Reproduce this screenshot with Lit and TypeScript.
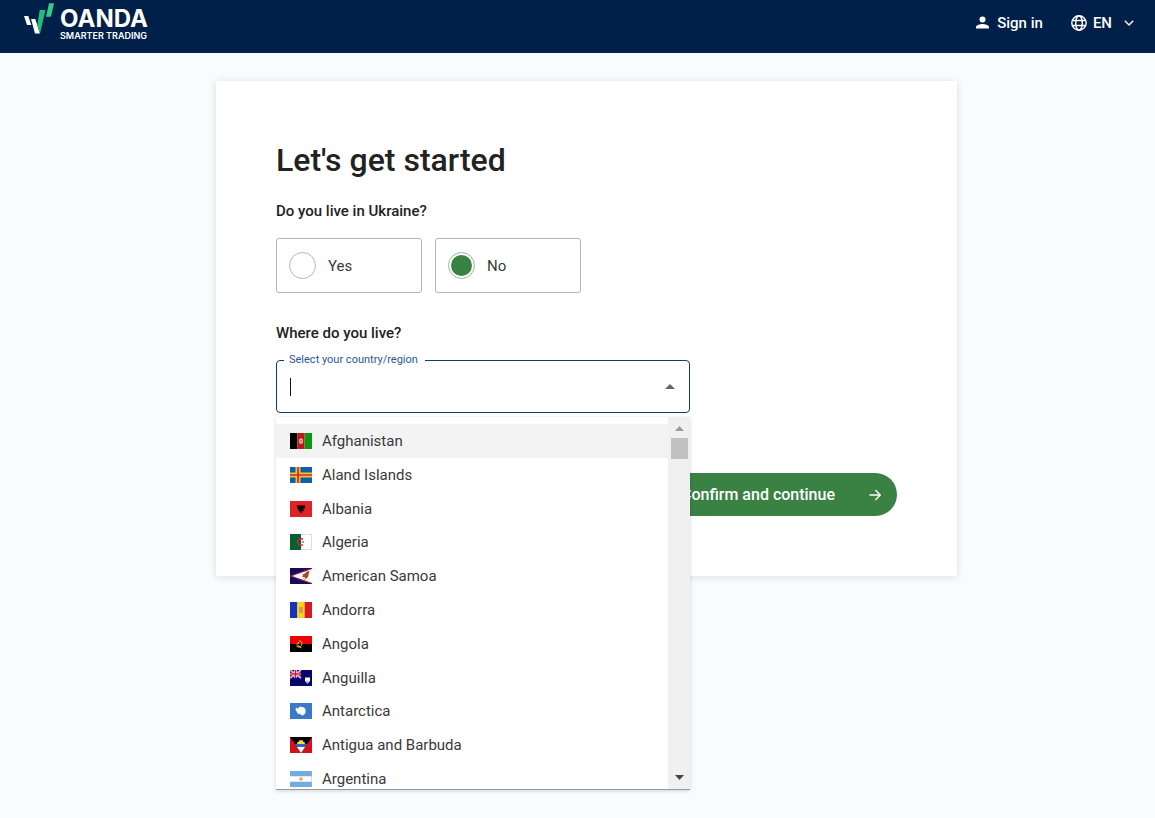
import { LitElement, html, svg, css } from "lit";
import { customElement, state } from "lit/decorators.js";

const flags: Record<string, unknown> = {
  Afghanistan: svg`<path fill="#000" d="M0 0h7.4v16H0z"/><path fill="#c01818" d="M7.4 0h7.2v16H7.4z"/><path fill="#0c9612" d="M14.6 0H22v16h-7.4z"/><path fill="#e9a9a9" d="M9 6.500 11 5l2 1.500V9l-.8 1.800H9.800L9 9z"/><path fill="#c84040" d="M10.500 7h1v2h-1z"/>`,
  "Aland Islands": svg`<path fill="#0f5fa8" d="M0 0h22v16H0z"/><path fill="#f2c230" d="M5.5 0h5v16h-5zM0 5.5h22v5H0z"/><path fill="#d0282e" d="M7.2 0h1.7v16H7.2zM0 7.2h22v1.6H0z"/>`,
  Albania: svg`<path fill="#dc2426" d="M0 0h22v16H0z"/><path fill="#1c0505" d="m11 5 1-1.2 1 .9 2-.6-.2 3.400-1.400.8.4 1.600-1.400.4L11 12.600l-1.400-2.300-1.400-.4.4-1.600-1.400-.8L7 4.100l2 .6 1-.9z"/>`,
  Algeria: svg`<path fill="#fff" d="M0 0h22v16H0z"/><path fill="#08602f" d="M0 0h11v16H0z"/><path fill="none" stroke="#cf2444" stroke-width="1.3" d="M13 5.4a3.3 3.3 0 1 0 0 5.2"/><path fill="#cf2444" d="m11 8 3-1-.4 1 .4 1z"/><path fill="none" stroke="#bbb" stroke-width=".6" d="M11 .3h10.7v15.400H11"/>`,
  "American Samoa": svg`<path fill="#160c5e" d="M0 0h22v16H0z"/><path fill="#c01c2e" d="M0 7.600 22 0v1L1 8l21 7v1L0 8.400z"/><path fill="#fff" d="M2 8 22 1v14z"/><path fill="#9a5025" d="m19.5 3-2.500.5-3 2.500-2.200.8 1.500.8-1.300 1.400 2.300-.1L16 11l2-2z"/><path fill="#e0a03a" d="m12 9.500 4 1.500-1.500 1z"/>`,
  Andorra: svg`<path fill="#1a30b8" d="M0 0h7.4v16H0z"/><path fill="#fbd21b" d="M7.4 0h7.200v16H7.4z"/><path fill="#d51a26" d="M14.6 0H22v16h-7.400z"/><path fill="#cf9f50" d="M9 5h4v5l-2 1.500L9 10z"/>`,
  Angola: svg`<path fill="#f00000" d="M0 0h22v8H0z"/><path fill="#000" d="M0 8h22v8H0z"/><path fill="none" stroke="#f4d22a" d="M9 5c3-.5 4 3.500 1.500 5.500-1 .8-3 .6-4-.2M6.500 8.500l5 3.500"/><circle cx="8.2" cy="7" r=".9" fill="#f4d22a"/>`,
  Anguilla: svg`<path fill="#07076a" d="M0 0h22v16H0z"/><path stroke="#fff" stroke-width="1.6" d="m0 0 11 8M11 0 0 8"/><path stroke="#d21034" stroke-width=".6" d="m0 0 11 8M11 0 0 8"/><path stroke="#fff" stroke-width="2.6" d="M5.500 0v8M0 4h11"/><path stroke="#d21034" stroke-width="1.4" d="M5.500 0v8M0 4h11"/><path fill="#fff" d="M15 7.500h5V11l-2.500 2.700L15 11z"/><path fill="#99b9e8" d="M15.500 10.700h4l-2 2.300z"/>`,
  Antarctica: svg`<path fill="#3a7ac8" d="M0 0h22v16H0z"/><path fill="#fff" d="m6 4.500 2 1.200 1.500-2 3 .3 2.200 1 1 2.500-.5 3-2.200 2-2-.5-.8-1-2.700-.5-.8-2L5.500 7z"/>`,
  "Antigua and Barbuda": svg`<path fill="#d8101c" d="M0 0h22v16H0z"/><path fill="#000" d="M0 0h22L11 16z"/><path fill="#ffd83a" d="m7 7 .5-2 1.400-.2.6-1.800 1.500.6 1.500-.6.6 1.800 1.400.2.5 2z"/><path fill="#2b65c8" d="M4.800 7h12.400l-2.100 3H6.900z"/><path fill="#fff" d="M6.900 10h8.200L11 16z"/>`,
  Argentina: svg`<path fill="#fff" d="M0 0h22v16H0z"/><path fill="#74acdf" d="M0 0h22v5.3H0zM0 10.7h22V16H0z"/><circle cx="11" cy="8" r="1.7" fill="#eba83a"/><path stroke="#aab8c4" stroke-width=".6" d="M21.7 0v16"/>`,
};

@customElement("country-picker")
export class CountryPicker extends LitElement {
  @state() private active = "Afghanistan";

  static styles = css`
    :host { display: block; position: relative; }
    * { box-sizing: border-box; }
    .field {
      display: flex; align-items: center; margin: 0; min-width: 0;
      height: 60px; padding: 0 14px 6px 13px;
      border: 1px solid #0a3f73; border-radius: 4px;
    }
    .legend { padding: 0 7px 0 5px; margin-left: -6px; font-size: 11px; line-height: 14px; color: #2a5a9a; }
    .caret { width: 1px; height: 18px; background: #111; }
    .input { flex: 1; min-width: 0; height: 36px; padding: 0; border: 0; outline: 0; background: none; font: 16px Roboto, sans-serif; caret-color: transparent; }
    .toggle { display: grid; place-items: center; width: 10px; height: 24px; padding: 0; border: 0; background: none; }
    .popup {
      position: absolute; z-index: 2; top: 100%; left: 0; right: 0; margin-top: 4px;
      display: flex; height: 373px; overflow: hidden; background: #fff;
      border-bottom: 1px solid #999; box-shadow: 0 1px 4px rgba(0, 0, 0, 0.16);
    }
    .list { flex: 1; display: grid; grid-template-rows: repeat(11, 1fr); height: 372px; margin: 7px 0 0; padding: 0; list-style: none; }
    .option { display: flex; align-items: center; gap: 10px; padding-left: 14px; font-size: 15px; color: #3a3a3a; }
    .option.active { background: #f3f3f3; }
    .flag { display: block; width: 22px; height: 16px; }
    .scroll { display: flex; flex-direction: column; align-items: center; width: 22px; padding: 9px 0; background: #f0f0f0; }
    .thumb { width: 17px; height: 21px; margin-top: 7px; margin-bottom: auto; background: #c1c1c1; }
  `;

  render() {
    return html`
      <fieldset class="field">
        <legend class="legend"><label for="country">Select your country/region</label></legend>
        <span class="caret"></span>
        <input class="input" id="country" role="combobox" aria-expanded="true" aria-controls="countries" autocomplete="off" />
        <button class="toggle" type="button" aria-label="Close list">
          <svg width="10" height="5" viewBox="0 0 10 5"><path fill="#666" d="M0 5 5 0l5 5z" /></svg>
        </button>
      </fieldset>
      <div class="popup">
        <ul class="list" id="countries" role="listbox" aria-label="Countries">
          ${Object.entries(flags).map(
            ([name, flag]) => html`
              <li class="option ${name === this.active ? "active" : ""}" role="option"
                aria-selected=${name === this.active} @mouseenter=${() => (this.active = name)}>
                <svg class="flag" viewBox="0 0 22 16" aria-hidden="true">${flag}</svg>
                <span>${name}</span>
              </li>`
          )}
        </ul>
        <div class="scroll" aria-hidden="true">
          <svg width="9" height="5" viewBox="0 0 9 5"><path fill="#999" d="M0 5 4.5 0 9 5z" /></svg>
          <div class="thumb"></div>
          <svg width="9" height="5" viewBox="0 0 9 5"><path fill="#444" d="m0 0 4.5 5L9 0z" /></svg>
        </div>
      </div>`;
  }
}

@customElement("app-root")
export class AppRoot extends LitElement {
  @state() private inUkraine = false;

  static styles = css`
    :host { display: block; min-height: 100vh; background: #f8fcff; color: #222; font-family: Roboto, sans-serif; }
    * { box-sizing: border-box; }
    .header { display: flex; align-items: center; justify-content: space-between; height: 53px; padding: 0 21px 8px 24px; background: #00204a; color: #fff; }
    .brand { display: flex; align-self: flex-start; gap: 6px; color: #fff; text-decoration: none; font-family: Inter, sans-serif; }
    .mark { display: block; width: 30px; height: 38px; }
    .wordmark { display: flex; flex-direction: column; padding-top: 7px; }
    .name { font-size: 24px; line-height: 24px; font-weight: 700; }
    .tagline { font-size: 9px; line-height: 10px; font-weight: 600; }
    .nav { display: flex; align-items: center; gap: 28px; }
    .action { display: flex; align-items: center; padding: 0; border: 0; background: none; color: #fff; font: 500 15px/20px Roboto, sans-serif; text-decoration: none; }
    .action svg { display: block; }
    .person { margin-right: 8px; }
    .globe { margin-right: 6px; }
    .chevron { margin-left: 12px; }
    .main { padding: 28px 0 28px 18px; }
    .card { width: 100%; max-width: 741px; margin: 0 auto; padding: 60px; background: #fff; box-shadow: 0 1px 8px rgba(0, 0, 0, 0.12); }
    .title { margin: 0 0 22px; font-size: 32px; line-height: 38px; font-weight: 500; }
    .group { margin: 0; padding: 0; border: 0; }
    .question { margin: 0; padding: 0; font-size: 15px; line-height: 20px; font-weight: 500; }
    .choices { display: flex; gap: 13px; margin-top: 17px; }
    .choice { display: flex; align-items: center; gap: 12px; width: 146px; height: 55px; padding: 0 12px; border: 1px solid #b5b5b5; border-radius: 3px; font-size: 15px; color: #3a3a3a; }
    .radio { appearance: none; width: 27px; height: 27px; margin: 0; padding: 2px; border: 1px solid #b5b5b5; border-radius: 50%; background: #fff content-box; }
    .radio:checked { border-color: #8fbb96; background-color: #398243; }
    .where { margin-top: 30px; }
    .picker { width: calc(100% * 2 / 3); margin-top: 10px; }
    .footer { display: flex; justify-content: flex-end; margin-top: 60px; }
    .submit { display: flex; align-items: center; gap: 34px; height: 43px; padding: 0 16px 0 44px; border: 0; border-radius: 22px; background: #398243; color: #fff; font: 500 16px/20px Roboto, sans-serif; }
  `;

  private choice(value: string, label: string, on: boolean) {
    return html`<label class="choice">
      <input class="radio" type="radio" name="ukraine" value=${value} .checked=${this.inUkraine === on}
        @change=${() => (this.inUkraine = on)} />
      ${label}
    </label>`;
  }

  render() {
    return html`
      <header class="header">
        <a class="brand" href="#" aria-label="OANDA Smarter Trading">
          <svg class="mark" viewBox="0 0 30 38" aria-hidden="true">
            <path fill="#fff" d="M0 16h4.3l3 9H3zM7 19h4.3L16 33.500h-5z" />
            <path fill="#25bb7c" d="M15.700 10h5.800L16 33.500l-2.800-8z" />
            <path fill="#35c98a" d="M25 3.300h5l-3 13.400h-5z" />
          </svg>
          <span class="wordmark"><span class="name">OANDA</span><span class="tagline">SMARTER TRADING</span></span>
        </a>
        <nav class="nav">
          <a class="action" href="#">
            <svg class="person" width="13" height="13" viewBox="0 0 13 13"><circle cx="6.5" cy="3.5" r="3" fill="#fff"/><path fill="#fff" d="M0 12.5V11c0-2 4.3-3 6.5-3s6.5 1 6.5 3v1.500z"/></svg>
            Sign in
          </a>
          <button class="action" type="button" aria-label="Language: EN">
            <svg class="globe" width="16" height="16" viewBox="0 0 16 16" fill="none" stroke="#fff" stroke-width="1.4"><circle cx="8" cy="8" r="7.2"/><ellipse cx="8" cy="8" rx="3.3" ry="7.2"/><path d="M1.3 5.5h13.4M1.3 10.500h13.4"/></svg>
            EN
            <svg class="chevron" width="10" height="6" viewBox="0 0 10 6" fill="none" stroke="#fff" stroke-width="1.4"><path d="m.8.7 4.2 4.2L9.2.7"/></svg>
          </button>
        </nav>
      </header>
      <main class="main">
        <form class="card" @submit=${(e: Event) => e.preventDefault()}>
          <h1 class="title">Let's get started</h1>
          <fieldset class="group">
            <legend class="question">Do you live in Ukraine?</legend>
            <div class="choices">${this.choice("yes", "Yes", true)}${this.choice("no", "No", false)}</div>
          </fieldset>
          <h2 class="question where">Where do you live?</h2>
          <country-picker class="picker"></country-picker>
          <div class="footer">
            <button class="submit" type="submit">
              Confirm and continue
              <svg width="12" height="12" viewBox="0 0 12 12" fill="none" stroke="#fff" stroke-width="1.4"><path d="M.5 6h10.7M6.3 1l5 5-5 5"/></svg>
            </button>
          </div>
        </form>
      </main>`;
  }
}
